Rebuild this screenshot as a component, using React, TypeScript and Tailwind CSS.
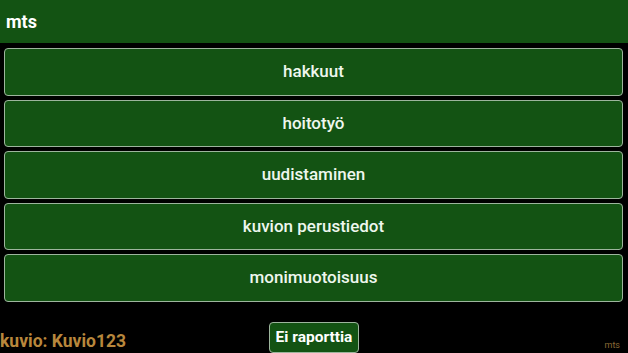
import React from "react";

const items = ["hakkuut", "hoitotyö", "uudistaminen", "kuvion perustiedot", "monimuotoisuus"];

export default function App() {
  return (
    <div className="w-[628px] h-[353px] bg-black flex flex-col overflow-hidden" style={{ fontFamily: "Roboto, 'Liberation Sans', sans-serif" }}>
      <div className="h-[43px] bg-[#135313] flex items-center px-[6px] shrink-0">
        <span className="text-white font-bold text-[18px]">mts</span>
      </div>
      <div className="flex flex-col gap-[4px] pl-[4px] pr-[5px] pt-[5px]">
        {items.map((t) => (
          <div
            key={t}
            className="h-[47.5px] bg-[#135313] border border-[#9db59d] rounded-[4px] flex items-center justify-center text-[#eef7ee] text-[17px] font-medium"
          >
            {t}
          </div>
        ))}
      </div>
      <div className="flex-1" />
      <div className="grid grid-cols-[1fr_auto_1fr] items-end h-[32px] shrink-0">
        <div className="text-[#b8873c] font-bold text-[17.5px] leading-none pb-[3px] whitespace-nowrap">kuvio: Kuvio123</div>
        <div className="h-[31px] px-[6px] bg-[#135313] border border-[#9db59d] rounded-[4px] flex items-center text-white font-bold text-[15.5px]">
          Ei raporttia
        </div>
        <div className="text-right text-[#8a6a35] text-[9px] leading-none pb-[3px] pr-[8px]">mts</div>
      </div>
    </div>
  );
}
